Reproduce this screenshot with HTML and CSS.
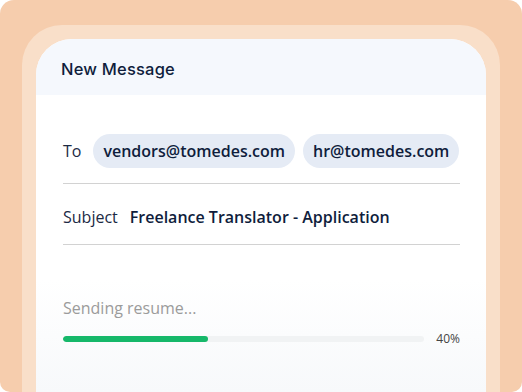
FILE: index.html
```html
<!DOCTYPE html>
<html lang="en">
<head>
  <meta charset="UTF-8" />
  <meta name="viewport" content="width=device-width, initial-scale=1.0" />
  <title>New Message</title>
  <link rel="stylesheet" href="styles.css">
</head>
<body>
  <div class="backdrop">
    <div class="frame">
      <div class="card">
        <header class="card-header">New Message</header>

        <div class="fields">
          <div class="field field-to">
            <span class="label">To</span>
            <span class="chip">vendors@tomedes.com</span>
            <span class="chip">hr@tomedes.com</span>
          </div>
          <div class="field field-subject">
            <span class="label">Subject</span>
            <span class="subject">Freelance Translator - Application</span>
          </div>
        </div>

        <div class="sending">
          <div class="sending-text">Sending resume...</div>
          <div class="progress">
            <div class="track"><div class="fill" style="width:40%"></div></div>
            <span class="percent">40%</span>
          </div>
        </div>
      </div>
    </div>
  </div>
</body>
</html>
```

FILE: styles.css
```css
:root {
  --outer: #f6cdad;
  --frame: #f9dfc9;
  --header-bg: #f5f8fd;
  --chip-bg: #e5ebf5;
  --navy: #0f1d3c;
  --line: #d2d2d2;
  --green: #16b86a;
}

* {
  box-sizing: border-box;
  margin: 0;
  padding: 0;
}

html, body {
  width: 522px;
  height: 392px;
  overflow: hidden;
  background: #fff;
}

body {
  font-family: 'Open Sans', sans-serif;
  color: var(--navy);
}

.backdrop {
  width: 522px;
  height: 392px;
  background: var(--outer);
  border-radius: 14px 14px 10px 10px;
  padding: 25px 22px 0;
  overflow: hidden;
}

.frame {
  height: 100%;
  background: var(--frame);
  border-radius: 40px 40px 0 0;
  padding: 14px 14px 0;
}

.card {
  height: 100%;
  background: linear-gradient(to bottom, #fff 0, #fff 240px, #f7f9fb 100%);
  border-radius: 36px 36px 0 0;
  overflow: hidden;
}

.card-header {
  height: 56px;
  background: var(--header-bg);
  padding: 4px 0 0 25px;
  display: flex;
  align-items: center;
  font-family: 'Inter', sans-serif;
  font-size: 16.5px;
  font-weight: 500;
  letter-spacing: 0.2px;
  color: var(--navy);
}

.fields {
  padding: 39px 26px 0 27px;
}

.field {
  display: flex;
  align-items: center;
  border-bottom: 1px solid var(--line);
  font-size: 16px;
}

.field-to {
  padding-bottom: 15px;
  gap: 8px;
}

.field-subject {
  padding: 16px 0 10px;
  height: 61px;
  gap: 12px;
}

.label {
  color: #1c2a44;
}

.field-to .label {
  margin-right: 4px;
}

.chip {
  height: 34px;
  line-height: 34px;
  padding: 0 10px;
  border-radius: 17px;
  background: var(--chip-bg);
  font-weight: 600;
  color: var(--navy);
  white-space: nowrap;
}

.subject {
  font-weight: 600;
  color: var(--navy);
  line-height: 34px;
}

.sending {
  padding: 52px 26px 0 27px;
}

.sending-text {
  font-size: 16px;
  color: #9b9b9b;
  line-height: 22px;
}

.progress {
  display: flex;
  align-items: center;
  gap: 12px;
  margin-top: 13px;
}

.track {
  flex: 1;
  height: 6px;
  background: #f1f3f4;
  border-radius: 3px;
  overflow: hidden;
}

.fill {
  height: 100%;
  background: var(--green);
  border-radius: 3px;
}

.percent {
  font-size: 12px;
  color: #444;
  line-height: 14px;
}
```
